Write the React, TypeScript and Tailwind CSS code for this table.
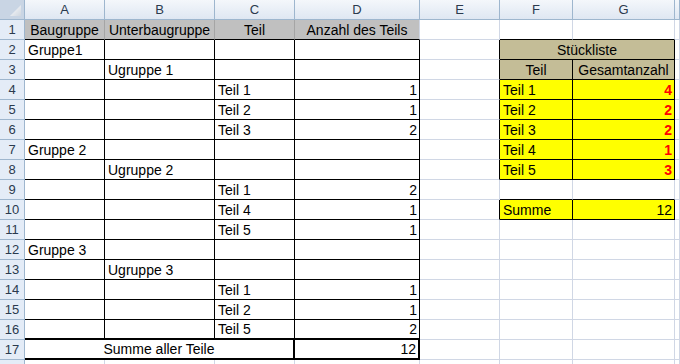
type Kind = "grid" | "black" | "thick" | "head" | "gray";

const rightCls: Record<Kind, string> = {
  grid: "border-r border-r-[#d0d7e5]",
  black: "border-r border-r-black",
  thick: "border-r-2 border-r-black",
  head: "border-r border-r-[#9eb6ce]",
  gray: "border-r border-r-[#a5a5a5]",
};

const bottomCls: Record<Kind, string> = {
  grid: "border-b border-b-[#d0d7e5]",
  black: "border-b border-b-black",
  thick: "border-b-2 border-b-black",
  head: "border-b border-b-[#9eb6ce]",
  gray: "border-b border-b-[#a5a5a5]",
};

const letters = ["A", "B", "C", "D", "E", "F", "G", "H"];

type Cell = { t: string; a?: "l" | "c" | "r"; red?: boolean; span?: number };

const cells: Record<string, Cell> = {
  A1: { t: "Baugruppe", a: "c" },
  B1: { t: "Unterbaugruppe", a: "c" },
  C1: { t: "Teil", a: "c" },
  D1: { t: "Anzahl des Teils", a: "c" },
  A2: { t: "Gruppe1" },
  B3: { t: "Ugruppe 1" },
  C4: { t: "Teil 1" },
  D4: { t: "1", a: "r" },
  C5: { t: "Teil 2" },
  D5: { t: "1", a: "r" },
  C6: { t: "Teil 3" },
  D6: { t: "2", a: "r" },
  A7: { t: "Gruppe 2" },
  B8: { t: "Ugruppe 2" },
  C9: { t: "Teil 1" },
  D9: { t: "2", a: "r" },
  C10: { t: "Teil 4" },
  D10: { t: "1", a: "r" },
  C11: { t: "Teil 5" },
  D11: { t: "1", a: "r" },
  A12: { t: "Gruppe 3" },
  B13: { t: "Ugruppe 3" },
  C14: { t: "Teil 1" },
  D14: { t: "1", a: "r" },
  C15: { t: "Teil 2" },
  D15: { t: "1", a: "r" },
  C16: { t: "Teil 5" },
  D16: { t: "2", a: "r" },
  A17: { t: "Summe aller Teile", a: "c", span: 3 },
  D17: { t: "12", a: "r" },
  F2: { t: "Stückliste", a: "c", span: 2 },
  F3: { t: "Teil", a: "c" },
  G3: { t: "Gesamtanzahl", a: "c" },
  F4: { t: "Teil 1" },
  G4: { t: "4", a: "r", red: true },
  F5: { t: "Teil 2" },
  G5: { t: "2", a: "r", red: true },
  F6: { t: "Teil 3" },
  G6: { t: "2", a: "r", red: true },
  F7: { t: "Teil 4" },
  G7: { t: "1", a: "r", red: true },
  F8: { t: "Teil 5" },
  G8: { t: "3", a: "r", red: true },
  F10: { t: "Summe" },
  G10: { t: "12", a: "r" },
};

// cells with a black box around them
const boxed = (r: number, c: number) => {
  if (r >= 2 && r <= 17 && c <= 3) return true;
  if ((c === 5 || c === 6) && ((r >= 2 && r <= 8) || r === 10)) return true;
  return false;
};
const thick = (r: number, c: number) => r === 17 && c <= 3;

const rightKind = (r: number, c: number): Kind => {
  if (r === 1 && c <= 2) return "gray";
  if (r === 1 && c === 3) return "grid";
  if (thick(r, c) || thick(r, c + 1)) return "thick";
  if (boxed(r, c) || boxed(r, c + 1)) return "black";
  return "grid";
};

const bottomKind = (r: number, c: number): Kind => {
  if (thick(r, c) || thick(r + 1, c)) return "thick";
  if (boxed(r, c) || boxed(r + 1, c)) return "black";
  return "grid";
};

const bgFor = (r: number, c: number) => {
  if (r === 1 && c <= 3) return "bg-[#c0c0c0]";
  if ((r === 2 || r === 3) && (c === 5 || c === 6)) return "bg-[#c4bd97]";
  if ((c === 5 || c === 6) && ((r >= 4 && r <= 8) || r === 10)) return "bg-[#ffff00]";
  return "bg-white";
};

function Corner() {
  return (
    <div className="h-5 border-r border-b border-r-[#9eb6ce] border-b-[#9eb6ce] bg-[#c9d5e4]">
      <svg width="24" height="19" viewBox="0 0 24 19">
        <defs>
          <linearGradient id="tri" x1="0" y1="0" x2="1" y2="1">
            <stop offset="0" stopColor="#ffffff" />
            <stop offset="1" stopColor="#cfd6df" />
          </linearGradient>
        </defs>
        <polygon points="21,5 21,16 10,16" fill="url(#tri)" />
      </svg>
    </div>
  );
}

export default function App() {
  const rows = Array.from({ length: 18 }, (_, i) => i + 1);

  return (
    <div className="h-[364px] w-[680px] overflow-hidden bg-white font-['Liberation_Sans',Arial,sans-serif] text-[14px] text-black">
      <div className="grid grid-cols-[25px_80px_110px_80px_125px_80px_73px_102px_1fr] auto-rows-[20px]">
        <Corner />
        {letters.map((l) => (
          <div
            key={l}
            className="box-border flex h-5 items-center justify-center border-r border-b border-r-[#9eb6ce] border-b-[#9eb6ce] bg-gradient-to-b from-[#f4f7fb] to-[#dfe7f2] text-[13px] text-[#2b3a4e]"
          >
            {l === "H" ? "" : l}
          </div>
        ))}

        {rows.map((r) => {
          const out = [
            <div
              key={`h${r}`}
              className="box-border flex h-5 items-center justify-center border-r border-b border-r-[#9eb6ce] border-b-[#9eb6ce] bg-[#e4ecf7] text-[13px] text-[#2b3a4e]"
            >
              {r < 18 ? r : ""}
            </div>,
          ];
          let c = 0;
          while (c < letters.length) {
            const key = `${letters[c]}${r}`;
            const cell = cells[key];
            const span = cell?.span ?? 1;
            const last = c + span - 1;
            const align =
              cell?.a === "c" ? "justify-center" : cell?.a === "r" ? "justify-end pr-[2px]" : "justify-start pl-[3px]";
            out.push(
              <div
                key={key}
                className={[
                  "box-border flex h-5 items-center overflow-hidden whitespace-nowrap leading-[20px]",
                  span === 3 ? "col-span-3" : span === 2 ? "col-span-2" : "",
                  rightCls[rightKind(r, last)],
                  bottomCls[bottomKind(r, c)],
                  bgFor(r, c),
                  align,
                  cell?.red ? "font-bold text-[#ff0000]" : "",
                ].join(" ")}
              >
                {cell?.t}
              </div>
            );
            c += span;
          }
          return out;
        })}
      </div>
    </div>
  );
}
